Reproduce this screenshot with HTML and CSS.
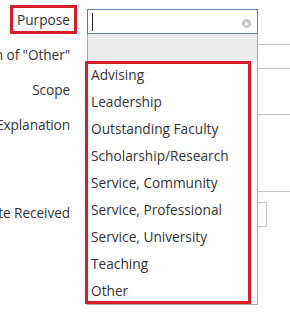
FILE: index.html
```html
<!DOCTYPE html>
<html>
<head>
	<title>Award Details</title>
	<link rel="stylesheet" href="styles.css">
</head>
<body>
	<div class="form">
		<div class="row">
			<label class="lbl"><span class="mark">Purpose</span></label>
			<div class="field">
				<div class="select focused">
					<span class="cursor"></span>
					<span class="clear">&times;</span>
				</div>
				<div class="dropdown">
					<div class="dd-top"></div>
					<ul class="options">
						<li>Advising</li>
						<li>Leadership</li>
						<li>Outstanding Faculty</li>
						<li>Scholarship/Research</li>
						<li>Service, Community</li>
						<li>Service, Professional</li>
						<li>Service, University</li>
						<li>Teaching</li>
						<li>Other</li>
					</ul>
				</div>
			</div>
		</div>
		<div class="row">
			<label class="lbl"><span>Explanation of "Other"</span></label>
			<div class="field"><div class="input wide"></div></div>
		</div>
		<div class="row">
			<label class="lbl"><span>Scope</span></label>
			<div class="field"><div class="input short"></div></div>
		</div>
		<div class="row">
			<label class="lbl"><span>Scope Explanation</span></label>
			<div class="field"><div class="textarea wide"></div></div>
		</div>
		<div class="row">
			<label class="lbl"><span>Date Received</span></label>
			<div class="field"><div class="input date"></div></div>
		</div>
	</div>
</body>
</html>
```

FILE: styles.css
```css
body {
	margin: 0;
	font-family: "Open Sans", Arial, sans-serif;
	font-size: 13.7px;
	color: #333;
	background: #fff;
}

.form {
	box-sizing: border-box;
	min-height: 316px;
	padding-top: 9px;
	overflow-x: clip;
}

.row {
	display: grid;
	grid-template-columns: 70px 1fr;
	column-gap: 17px;
	margin-bottom: 10px;
}

.lbl {
	display: flex;
	justify-content: flex-end;
	align-items: flex-start;
	white-space: nowrap;
	line-height: 22px;
	letter-spacing: -0.1px;
}

.mark {
	display: inline-block;
	outline: 3px solid #d71f2b;
	outline-offset: 2px;
	padding: 0 2px;
	margin-right: -2px;
	line-height: 19px;
	margin-top: 1px;
	letter-spacing: 0;
}

.field {
	position: relative;
}

.select,
.input,
.textarea {
	box-sizing: border-box;
	height: 25px;
	border: 1px solid #c2c2c2;
	background: #fff;
}

.select {
	width: 171px;
	position: relative;
}

.focused {
	border-color: #5b7db5;
}

.cursor {
	position: absolute;
	left: 4px;
	top: 3px;
	width: 1px;
	height: 18px;
	background: #222;
}

.clear {
	position: absolute;
	right: 6px;
	top: 9px;
	width: 9px;
	height: 9px;
	border-radius: 50%;
	background: #c4c4c4;
	color: #fff;
	font-size: 9px;
	line-height: 9px;
	text-align: center;
	font-weight: bold;
}

.wide {
	width: 320px;
}

.short {
	width: 140px;
}

.textarea {
	height: 78px;
}

.date {
	width: 180px;
}

.dropdown {
	position: absolute;
	top: 25px;
	left: 0;
	z-index: 5;
	box-sizing: border-box;
	width: 171px;
	height: 271px;
	border: 1px solid #aaa;
	border-top: 0;
	background: #fff;
}

.dd-top {
	height: 27px;
	background: #ececec;
}

.options {
	list-style: none;
	margin: 0 0 0 -3px;
	padding: 0;
	width: 166px;
	outline: 3px solid #d71f2b;
	outline-offset: -3px;
}

.options li {
	height: 27px;
	line-height: 27px;
	padding-left: 6px;
	white-space: nowrap;
}
```
